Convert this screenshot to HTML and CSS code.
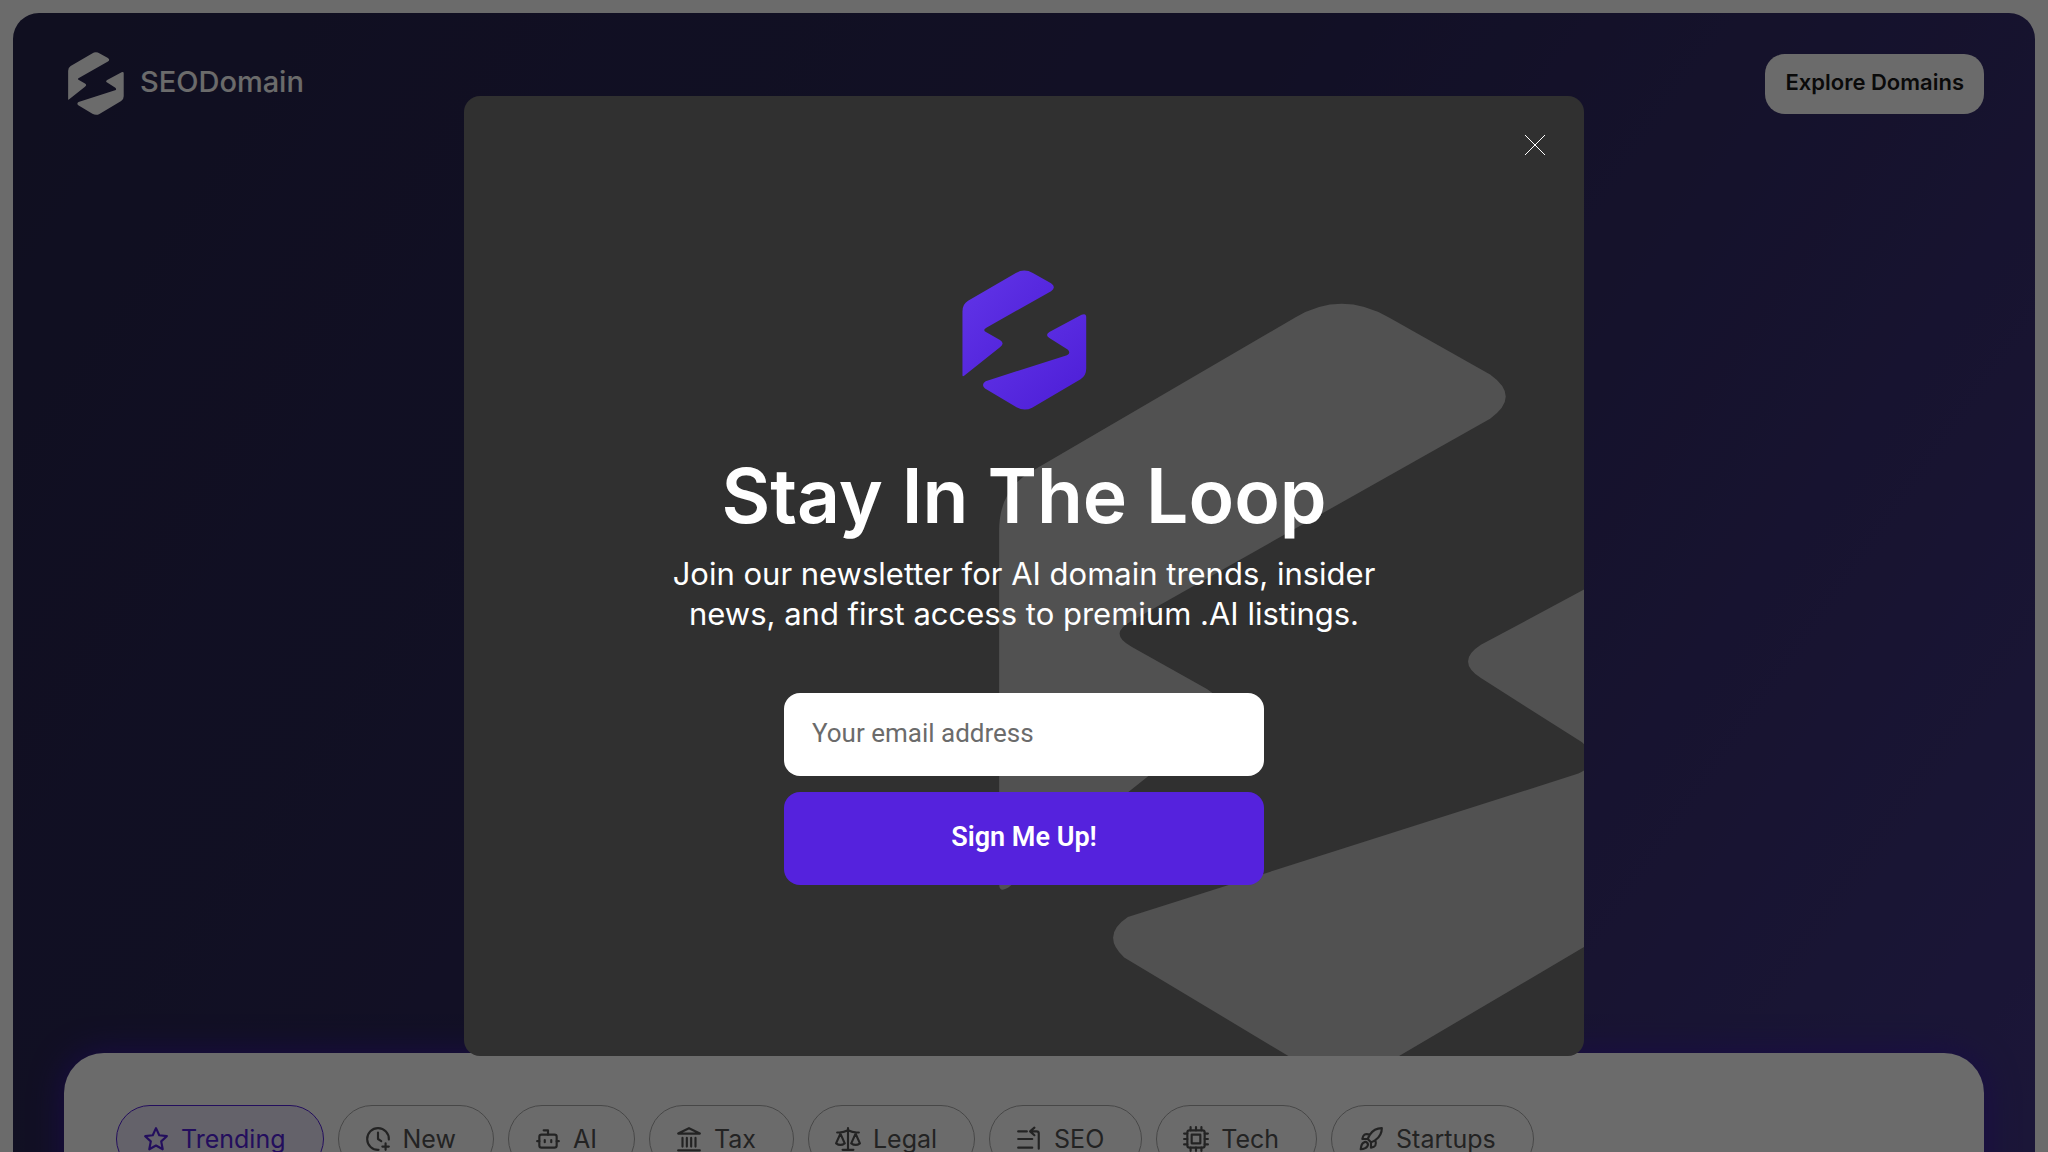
FILE: index.html
```html
<!DOCTYPE html>
<html lang="en">
<head>
    <meta charset="UTF-8">
    <meta name="viewport" content="width=device-width, initial-scale=1.0">
    <title>SEODomain</title>
    <link rel="stylesheet" href="styles.css">
</head>
<body>

    <!-- shared logo shape -->
    <svg class="defs" width="0" height="0" aria-hidden="true">
        <defs>
            <linearGradient id="purple" x1="0" y1="0" x2="1" y2="1">
                <stop offset="0" stop-color="#6236e8"/>
                <stop offset="1" stop-color="#4c1cd6"/>
            </linearGradient>
            <symbol id="logo" viewBox="64 57 376 422">
                <path d="M65 374V182Q65 160 82 150L226 66Q251 51 277 66L332 97Q349 109 332 121L137 231Q124 238 137 245L178 268Q194 278 178 290L70 376Q65 379 65 374Z"/>
                <path d="M438 199V354Q438 376 421 386L275 472Q252 484 228 471L133 414Q120 402 135 392L380 314Q393 308 382 297L327 262Q313 253 327 244L424 192Q438 186 438 199Z"/>
            </symbol>
        </defs>
    </svg>

    <div class="hero">
        <header class="header">
            <a class="brand" href="#">
                <svg class="brand-logo"><use href="#logo"/></svg>
                <span>SEODomain</span>
            </a>
            <button class="explore" type="button">Explore Domains</button>
        </header>

        <main class="card">
            <nav class="chips">
                <button class="chip active" type="button">
                    <svg viewBox="0 0 24 24"><path d="M12 2l3 6.500 7 .9-5.200 4.800 1.400 7.300L12 18l-6.200 3.500 1.400-7.300L2 9.400l7-.9z"/></svg>
                    Trending
                </button>
                <button class="chip" type="button">
                    <svg viewBox="0 0 24 24"><path d="M12.500 22A10 10 0 1 1 22 12.500M12 6v6l3 2M19 16v6M16 19h6"/></svg>
                    New
                </button>
                <button class="chip" type="button">
                    <svg viewBox="0 0 24 24"><path d="M12 8V4H8M2 14h2M20 14h2M9 13v2M15 13v2"/><rect x="4" y="8" width="16" height="12" rx="2"/></svg>
                    AI
                </button>
                <button class="chip" type="button">
                    <svg viewBox="0 0 24 24"><path d="M2 7l10-5 10 5zM6 11v8M10 11v8M14 11v8M18 11v8M2 22.500h20"/></svg>
                    Tax
                </button>
                <button class="chip" type="button">
                    <svg viewBox="0 0 24 24"><path d="M12 2v20M7 22h10M2 6h2q4 0 8-2 4 2 8 2h2M5 7l-4 9q4 3 8 0zM19 7l-4 9q4 3 8 0z"/></svg>
                    Legal
                </button>
                <button class="chip" type="button">
                    <svg viewBox="0 0 24 24"><path d="M2 5h8M2 12h13M2 20h13M21 21V7q0-2-2-2h-5M17 1.500L13 5l4 3.500"/></svg>
                    SEO
                </button>
                <button class="chip" type="button">
                    <svg viewBox="0 0 24 24"><rect x="4" y="4" width="16" height="16" rx="2"/><rect x="8" y="8" width="8" height="8"/><path d="M7 1v3M12 1v3M17 1v3M7 20v3M12 20v3M17 20v3M1 7h3M1 12h3M1 17h3M20 7h3M20 12h3M20 17h3"/></svg>
                    Tech
                </button>
                <button class="chip" type="button">
                    <svg viewBox="0 0 24 24"><path d="M9 12a22 22 0 0 1 2-4A13 13 0 0 1 22 2c0 3-1 7.500-6 11a22 22 0 0 1-4 2zM9 12H4s.5-3 2-4c1.600-1 5 0 5 0M12 15v5s3-.5 4-2c1-1.600 0-5 0-5M5 15.500c-2 1.200-2.500 6-2.500 6s4.500-.5 6-2.500c1-1.300.8-2.500 0-3.500-1-1-2.500-.8-3.500 0z"/></svg>
                    Startups
                </button>
            </nav>
        </main>
    </div>

    <!-- newsletter popup -->
    <div class="overlay">
        <div class="modal" role="dialog" aria-modal="true" aria-labelledby="modal-title">
            <svg class="watermark" aria-hidden="true"><use href="#logo"/></svg>
            <button class="close" type="button" aria-label="Close">
                <svg viewBox="0 0 22 22"><path d="M1 1l20 20M21 1L1 21"/></svg>
            </button>
            <div class="modal-content">
                <svg class="modal-logo"><use href="#logo"/></svg>
                <h2 id="modal-title">Stay In The Loop</h2>
                <p>Join our newsletter for AI domain trends, insider news, and first access to premium .AI listings.</p>
                <form class="signup">
                    <input type="email" placeholder="Your email address" aria-label="Your email address">
                    <button type="submit">Sign Me Up!</button>
                </form>
            </div>
        </div>
    </div>

</body>
</html>
```

FILE: styles.css
```css
* {
    box-sizing: border-box;
}
body {
    margin: 0;
    height: 100vh;
    overflow: hidden;
    background: #fff;
    font-family: Inter, sans-serif;
}
button, input {
    font-family: inherit;
}
.defs {
    position: absolute;
}

/* page */
.hero {
    display: flex;
    flex-direction: column;
    justify-content: space-between;
    min-height: calc(100vh + 88px);
    margin: 13px;
    padding: 39px 51px 0;
    border-radius: 26px;
    background: linear-gradient(125deg, #27244d 0%, #2c275a 45%, #423688 100%);
}
.header {
    display: flex;
    align-items: center;
    justify-content: space-between;
}
.brand {
    display: flex;
    align-items: center;
    gap: 16px;
    padding-left: 4px;
    color: #fff;
    font-size: 29px;
    font-weight: 500;
    text-decoration: none;
}
.brand span {
    padding-bottom: 5px;
}
.brand-logo {
    width: 56px;
    height: 63px;
    fill: #fff;
}
.explore {
    height: 60px;
    padding: 0 20px 4px;
    border: none;
    border-radius: 20px;
    background: #fff;
    color: #1a1a1a;
    font-size: 22px;
    font-weight: 600;
}
.card {
    height: 200px;
    padding: 52px;
    border-radius: 40px 40px 0 0;
    background: #fff;
    box-shadow: 0 0 32px #3c1ca8;
}
.chips {
    display: flex;
    gap: 14px;
}
.chip {
    display: flex;
    align-items: center;
    gap: 12px;
    height: 68px;
    padding: 0 37px 0 26px;
    border: 1px solid #aaa;
    border-radius: 34px;
    background: none;
    color: #555;
    font-size: 25px;
}
.chip svg {
    width: 26px;
    height: 26px;
    fill: none;
    stroke: currentColor;
    stroke-width: 2;
    stroke-linecap: round;
    stroke-linejoin: round;
}
.chip.active {
    border-color: #5522dd;
    background: #eee9fc;
    color: #5522dd;
}

/* popup */
.overlay {
    position: fixed;
    inset: 0;
    display: flex;
    align-items: center;
    justify-content: center;
    background: rgba(0, 0, 0, 0.58);
}
.modal {
    position: relative;
    width: 1120px;
    max-width: 100%;
    padding: 174px 190px 171px;
    border-radius: 16px;
    background: #303030;
    overflow: hidden;
    color: #fff;
}
.watermark {
    position: absolute;
    top: 205px;
    left: 533px;
    width: 692px;
    height: 776px;
    fill: #515151;
}
.close {
    position: absolute;
    top: 32px;
    right: 32px;
    display: flex;
    padding: 6px;
    border: none;
    background: none;
}
.close svg {
    width: 22px;
    height: 22px;
    stroke: #fff;
    stroke-width: 1;
}
.modal-content {
    position: relative;
    display: flex;
    flex-direction: column;
    align-items: center;
    text-align: center;
}
.modal-logo {
    width: 125px;
    height: 140px;
    fill: url(#purple);
}
.modal-content h2 {
    margin: 40px 0 12px;
    font-size: 75px;
    font-weight: 600;
    line-height: 92px;
}
.modal-content p {
    margin: 0;
    font-size: 31px;
    line-height: 40px;
}
.signup {
    display: flex;
    flex-direction: column;
    gap: 16px;
    width: 480px;
    margin-top: 59px;
}
.signup input {
    height: 83px;
    padding: 0 28px 4px;
    border: none;
    border-radius: 16px;
    background: #fff;
    font-family: Roboto, sans-serif;
    font-size: 26px;
}
.signup input::placeholder {
    color: #6b6b6b;
}
.signup button {
    height: 93px;
    padding: 0 0 4px;
    border: none;
    border-radius: 16px;
    background: #5522dd;
    color: #fff;
    font-family: Roboto, sans-serif;
    font-size: 27px;
    font-weight: 600;
}
```
